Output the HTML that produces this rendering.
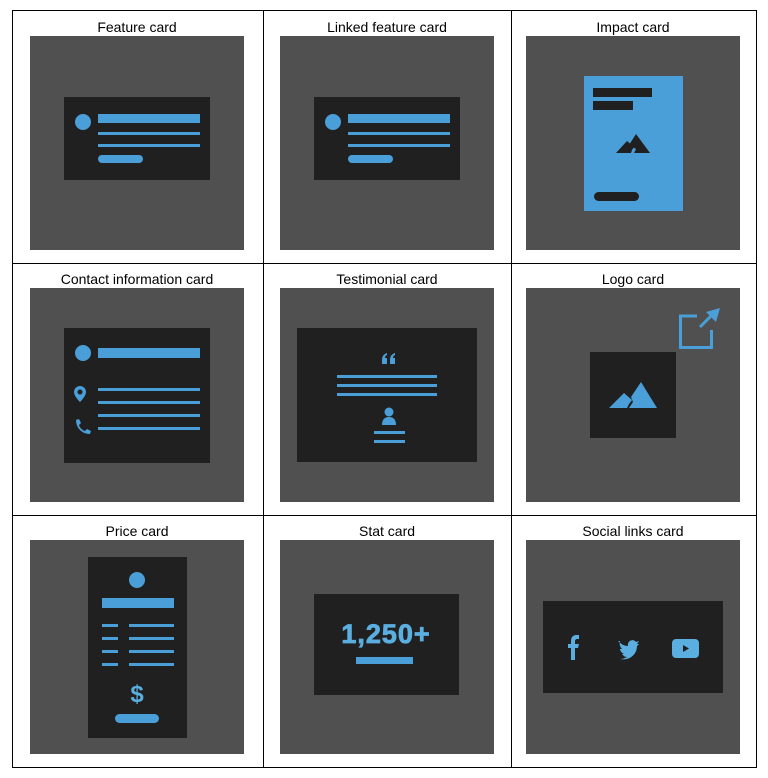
<!DOCTYPE html>
<html><head><meta charset="utf-8"><style>
html,body{margin:0;padding:0;background:#fff;width:768px;height:778px;overflow:hidden}
svg{display:block}
text{font-family:"Liberation Sans",Arial,sans-serif}
</style></head><body>
<svg width="768" height="778" viewBox="0 0 768 778" xmlns="http://www.w3.org/2000/svg">
<g fill="#505050">
<rect x="30" y="36" width="214" height="214"/><rect x="280" y="36" width="214" height="214"/><rect x="526" y="36" width="214" height="214"/>
<rect x="30" y="288" width="214" height="214"/><rect x="280" y="288" width="214" height="214"/><rect x="526" y="288" width="214" height="214"/>
<rect x="30" y="540" width="214" height="214"/><rect x="280" y="540" width="214" height="214"/><rect x="526" y="540" width="214" height="214"/>
</g>
<g stroke="#000" stroke-width="1" fill="none" shape-rendering="crispEdges">
<rect x="12.5" y="10.5" width="744" height="757"/>
<line x1="263.5" y1="10" x2="263.5" y2="768"/><line x1="511.5" y1="10" x2="511.5" y2="768"/>
<line x1="12" y1="263.5" x2="757" y2="263.5"/><line x1="12" y1="515.5" x2="757" y2="515.5"/>
</g>
<g font-size="14" fill="#000" text-anchor="middle">
<text x="137" y="32">Feature card</text><text x="387" y="32">Linked feature card</text><text x="633" y="32">Impact card</text>
<text x="137" y="284">Contact information card</text><text x="387" y="284">Testimonial card</text><text x="633" y="284">Logo card</text>
<text x="137" y="536">Price card</text><text x="387" y="536">Stat card</text><text x="633" y="536">Social links card</text>
</g>
<g id="fc">
<rect x="64" y="97" width="146" height="83" fill="#202020"/>
<g fill="#4a9fd8"><circle cx="83" cy="122" r="8"/><rect x="98" y="114" width="102" height="9"/><rect x="98" y="132" width="102" height="3"/><rect x="98" y="144" width="102" height="3"/><rect x="98" y="155" width="45" height="8" rx="4"/></g>
</g>
<use href="#fc" x="250"/>
<rect x="584" y="76" width="99" height="135" fill="#4a9fd8"/>
<g fill="#202020"><rect x="593" y="88" width="59" height="9"/><rect x="593" y="101" width="40" height="9"/>
<path d="M616 153 L627 141 L634 147 L632 150 L631 153 Z M629 145 L636 134 L650 153 L634 153 L636 149 Z"/>
<rect x="594" y="192" width="45" height="9" rx="4.5"/></g>
<rect x="64" y="328" width="146" height="135" fill="#202020"/>
<g fill="#4a9fd8"><circle cx="83" cy="353" r="8"/><rect x="98" y="348" width="102" height="10"/>
<rect x="98" y="388" width="102" height="3"/><rect x="98" y="401" width="102" height="3"/><rect x="98" y="414" width="102" height="3"/><rect x="98" y="427" width="102" height="3"/>
<path d="M80 386 a6 6 0 0 1 6 6 c0 3 -3 7 -6 10 c-3 -3 -6 -7 -6 -10 a6 6 0 0 1 6 -6z M80 389.5 a2.5 2.5 0 1 0 0.01 0z" fill-rule="evenodd"/>
<path d="M76 420 l3 -1 l2 4 l-2 2 c1 3 3 5 6 6 l2 -2 l4 2 l-1 3 c-8 0 -14 -6 -14 -14z"/></g>
<rect x="297" y="328" width="180" height="134" fill="#202020"/>
<g fill="#4a9fd8">
<path d="M382 364 v-4 c0 -4 2 -6 5 -7 v2 c-1.5 0.5 -2 1.5 -2 3 h2 v6z M390 364 v-4 c0 -4 2 -6 5 -7 v2 c-1.5 0.5 -2 1.5 -2 3 h2 v6z"/>
<rect x="337" y="375" width="100" height="3"/><rect x="337" y="384" width="100" height="3"/><rect x="337" y="393" width="100" height="3"/>
<circle cx="389" cy="412" r="4.5"/><path d="M382 425 c0 -6 3 -8 7 -8 c4 0 7 2 7 8z"/>
<rect x="374" y="431" width="31" height="3"/><rect x="374" y="440" width="31" height="3"/></g>
<rect x="590" y="352" width="86" height="86" fill="#202020"/>
<path fill="#4a9fd8" d="M609 408 L624 393 L632 400 L629 404 L627 408 Z M631 397 L641 382 L657 408 L629 408 L633 402 Z"/>
<g stroke="#4a9fd8" stroke-width="3" fill="none"><path d="M697 316 H680.5 V347.5 H711.5 V330"/><line x1="700" y1="327" x2="712" y2="315"/></g>
<path fill="#4a9fd8" d="M720 308 L716 322 L706 312 Z"/>
<rect x="88" y="557" width="99" height="181" fill="#202020"/>
<g fill="#4a9fd8"><circle cx="137" cy="580" r="8"/><rect x="102" y="598" width="72" height="10"/>
<rect x="102" y="624" width="16" height="3"/><rect x="129" y="624" width="45" height="3"/>
<rect x="102" y="637" width="16" height="3"/><rect x="129" y="637" width="45" height="3"/>
<rect x="102" y="650" width="16" height="3"/><rect x="129" y="650" width="45" height="3"/>
<rect x="102" y="663" width="16" height="3"/><rect x="129" y="663" width="45" height="3"/>
<text x="137" y="702" font-size="24" font-weight="bold" text-anchor="middle" fill="#5aaee0">$</text>
<rect x="115" y="714" width="44" height="9" rx="4.5"/></g>
<rect x="314" y="594" width="145" height="101" fill="#202020"/>
<text x="386" y="643" font-size="27" font-weight="bold" fill="#5aaee0" text-anchor="middle" letter-spacing="1" stroke="#5aaee0" stroke-width="0.8">1,250+</text>
<rect x="356" y="657" width="57" height="7" fill="#4a9fd8"/>
<rect x="543" y="601" width="180" height="92" fill="#202020"/>
<g fill="#5aaee0">
<path d="M571 660 V648 H568 V644 H571 V641 c0 -4 2 -6 6 -6 h2 v4 h-2 c-1 0 -2 1 -2 2 v3 h4 l-1 4 h-3 v12 z"/>
<path d="M618 641 c3 3 6 5 10 5 c-1 -5 5 -8 8 -4 l3 -1 l-2 3 l2 0 l-2 2 c0 8 -7 15 -17 13 c3 0 5 -1 7 -2 c-3 0 -4 -2 -5 -3 h2 c-2 -1 -4 -3 -4 -5 l2 0 c-2 -2 -3 -5 -2 -8z"/>
<path fill-rule="evenodd" d="M676 639 h19 a4 4 0 0 1 4 4 v11 a4 4 0 0 1 -4 4 h-19 a4 4 0 0 1 -4 -4 v-11 a4 4 0 0 1 4 -4z M683 645 v7 l6 -3.5z"/>
</g>
</svg>
</body></html>
